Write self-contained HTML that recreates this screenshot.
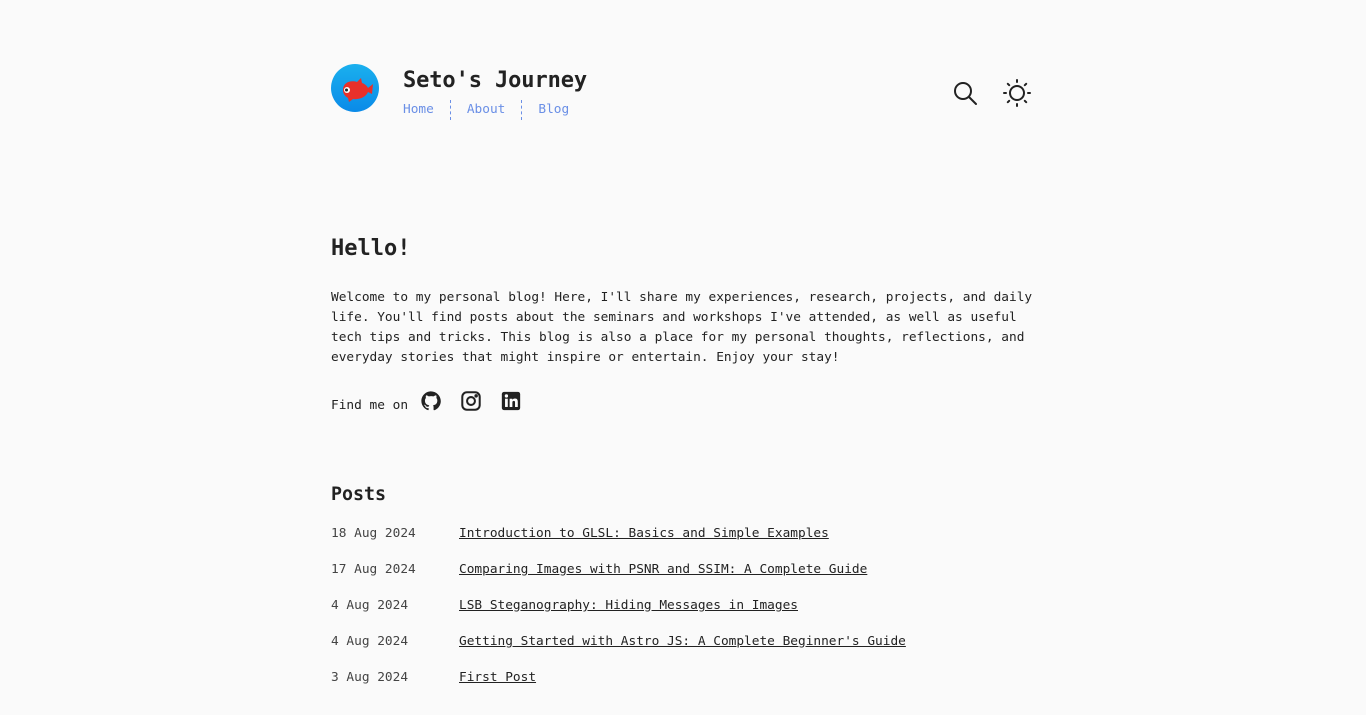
<!DOCTYPE html>
<html><head><meta charset="utf-8"><style>
*{margin:0;padding:0;box-sizing:border-box}
body{background:#fafafa;width:1366px;height:715px;font-family:"DejaVu Sans Mono","Liberation Mono",monospace;color:#222;font-size:12.8px;overflow:hidden;position:relative}
.abs{position:absolute}
.title{left:403px;top:67px;font-size:22px;font-weight:bold;color:#222;line-height:28px;letter-spacing:-0.1px}
.nav{left:403px;top:100px;display:flex;font-size:12.8px;color:#6a8fe6;line-height:20px}
.nav span{padding:0 16px;border-left:1px dashed #6a8fe6}
.nav span:first-child{padding-left:0;border:none}
h1{position:absolute;left:331px;top:235px;font-size:22px;font-weight:bold;line-height:28px}
.p{left:331px;top:288px;width:710px;line-height:20px}
.find{left:331px;top:396px;line-height:20px;display:flex;align-items:center}
h2{position:absolute;left:331px;top:483px;font-size:18.3px;font-weight:bold;line-height:24px}
.post{position:absolute;left:331px;line-height:20px;display:flex}
.post .d{width:128px;color:#444}
.post a{color:#222;text-decoration:underline}
</style></head><body>
<svg class="abs" style="left:331px;top:64px" width="48" height="48" viewBox="0 0 48 48">
<defs><linearGradient id="g" x1="0" y1="0" x2="0" y2="1"><stop offset="0" stop-color="#1ab0ee"/><stop offset="1" stop-color="#0a8ae8"/></linearGradient></defs>
<circle cx="24" cy="24" r="24" fill="url(#g)"/>
<path d="M12 26 C12 18 20 16 26 18 L30 14 L31 19 C34 20 36 22 37 24 L42 20 L41 30 L37 28 C35 33 28 36 22 35 L18 38 L17 34 C14 32 12 30 12 26Z" fill="#e8302a"/>
<circle cx="16" cy="26" r="3" fill="#fff"/><circle cx="15.5" cy="26" r="1.5" fill="#222"/>
</svg>
<div class="abs title">Seto's Journey</div>
<div class="abs nav"><span>Home</span><span>About</span><span>Blog</span></div>
<svg class="abs" style="left:951px;top:79px" width="28" height="28" viewBox="0 0 28 28" fill="none" stroke="#222" stroke-width="2" stroke-linecap="round"><circle cx="12" cy="12" r="8"/><path d="M18 18 L25 25"/></svg>
<svg class="abs" style="left:1002px;top:78px" width="30" height="30" viewBox="0 0 30 30" fill="none" stroke="#222" stroke-width="2" stroke-linecap="round"><circle cx="15" cy="15" r="7"/><path d="M15 2v2M15 26v2M2 15h2M26 15h2M5.8 5.8l1.4 1.4M22.8 22.8l1.4 1.4M5.8 24.2l1.4-1.4M22.8 7.2l1.4-1.4"/></svg>
<h1>Hello!</h1>
<div class="abs p">Welcome to my personal blog! Here, I'll share my experiences, research, projects, and daily life. You'll find posts about the seminars and workshops I've attended, as well as useful tech tips and tricks. This blog is also a place for my personal thoughts, reflections, and everyday stories that might inspire or entertain. Enjoy your stay!</div>
<div class="abs find">Find me on
<svg style="margin-left:12px;margin-top:-10px" width="22" height="22" viewBox="0 0 24 24" fill="#222"><path d="M12 1.5C6.2 1.5 1.5 6.2 1.5 12c0 4.6 3 8.6 7.2 10 .5.1.7-.2.7-.5v-1.8c-2.9.6-3.500-1.4-3.5-1.4-.5-1.200-1.2-1.5-1.2-1.5-1-.7.1-.7.1-.7 1 .1 1.6 1.1 1.6 1.1.9 1.6 2.5 1.1 3.1.9.1-.7.4-1.1.7-1.4-2.300-.3-4.800-1.2-4.800-5.2 0-1.100.4-2.100 1.100-2.800-.1-.3-.5-1.300.1-2.800 0 0 .9-.3 2.9 1.100a10 10 0 0 1 5.300 0c2-1.400 2.900-1.100 2.900-1.100.6 1.500.2 2.500.1 2.800.7.7 1.100 1.700 1.100 2.800 0 4-2.500 4.900-4.800 5.200.4.3.7 1 .7 2v2.900c0 .3.2.6.7.5 4.200-1.400 7.200-5.400 7.200-10C22.500 6.200 17.800 1.500 12 1.500z"/></svg>
<svg style="margin-left:18px;margin-top:-10px" width="22" height="22" viewBox="0 0 24 24" fill="none" stroke="#222" stroke-width="2.2"><rect x="2.5" y="2.5" width="19" height="19" rx="5"/><circle cx="12" cy="12" r="4.3"/><circle cx="17.6" cy="6.4" r=".8" fill="#222"/></svg>
<svg style="margin-left:18px;margin-top:-10px" width="22" height="22" viewBox="0 0 24 24"><rect x="2" y="2" width="20" height="20" rx="2.5" fill="#222"/><rect x="5.5" y="9.5" width="3" height="9" fill="#fff"/><circle cx="7" cy="6.5" r="1.8" fill="#fff"/><path d="M10.5 9.5h2.9v1.3c.5-.9 1.6-1.5 3-1.5 2.4 0 3 1.6 3 3.6v5.6h-3v-5c0-1-.3-1.7-1.3-1.7s-1.6.7-1.6 1.7v5h-3z" fill="#fff"/></svg>
</div>
<h2>Posts</h2>
<div class="post" style="top:524px"><span class="d">18 Aug 2024</span><a>Introduction to GLSL: Basics and Simple Examples</a></div>
<div class="post" style="top:560px"><span class="d">17 Aug 2024</span><a>Comparing Images with PSNR and SSIM: A Complete Guide</a></div>
<div class="post" style="top:596px"><span class="d">4 Aug 2024</span><a>LSB Steganography: Hiding Messages in Images</a></div>
<div class="post" style="top:632px"><span class="d">4 Aug 2024</span><a>Getting Started with Astro JS: A Complete Beginner's Guide</a></div>
<div class="post" style="top:668px"><span class="d">3 Aug 2024</span><a>First Post</a></div>
</body></html>
